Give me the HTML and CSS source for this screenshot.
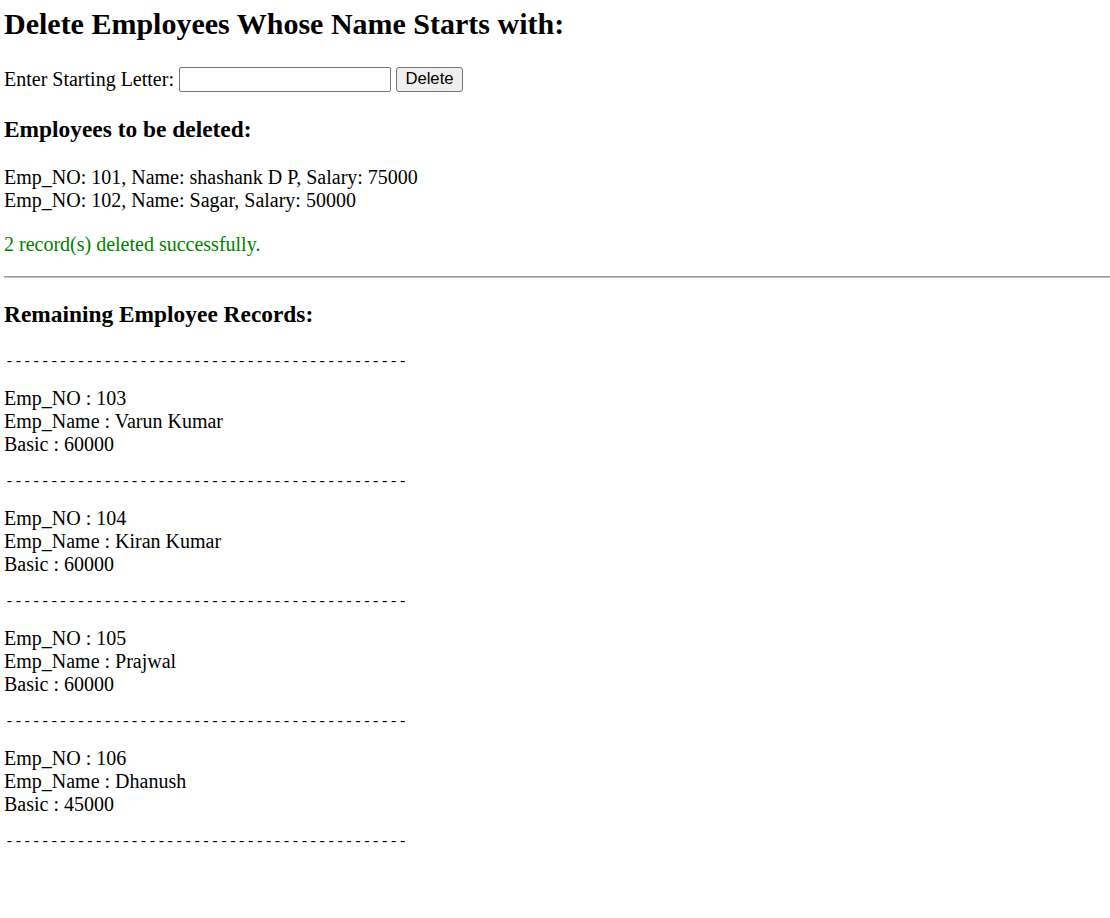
FILE: index.html
```html
<!DOCTYPE html>
<html>
<head>
<meta charset="utf-8">
<title>Delete Employees</title>
<link rel="stylesheet" href="styles.css">
</head>
<body>
<h2 class="title">Delete Employees Whose Name Starts with:</h2>
<form class="form">Enter Starting Letter: <input class="field" type="text"> <button class="btn" type="button">Delete</button></form>
<h3 class="sub">Employees to be deleted:</h3>
<div class="list">Emp_NO: 101, Name: shashank D P, Salary: 75000<br>Emp_NO: 102, Name: Sagar, Salary: 50000</div>
<p class="ok">2 record(s) deleted successfully.</p>
<hr class="rule">
<h3 class="sub sub-records">Remaining Employee Records:</h3>
<pre class="dash">---------------------------------------------</pre>
Emp_NO : 103<br>Emp_Name : Varun Kumar<br>Basic : 60000
<pre class="dash">---------------------------------------------</pre>
Emp_NO : 104<br>Emp_Name : Kiran Kumar<br>Basic : 60000
<pre class="dash">---------------------------------------------</pre>
Emp_NO : 105<br>Emp_Name : Prajwal<br>Basic : 60000
<pre class="dash">---------------------------------------------</pre>
Emp_NO : 106<br>Emp_Name : Dhanush<br>Basic : 45000
<pre class="dash">---------------------------------------------</pre>
</body>
</html>
```
FILE: styles.css
```css
html { background: #fff; }
body {
  margin: 0 0 0 4px;
  font-family: "Liberation Serif", "Times New Roman", serif;
  font-size: 20px;
  line-height: 23px;
  color: #000;
}
.title {
  font-size: 30px;
  line-height: 34.5px;
  margin: 6.5px 0 24.9px;
  font-weight: bold;
}
.form {
  margin: 0;
  display: flex;
  align-items: center;
  height: 26.5px;
  white-space: pre;
}
.field {
  box-sizing: border-box;
  width: 212px;
  height: 25px;
  margin: 0 5px 0 0;
  border: 1px solid #767676;
  border-radius: 2px;
  padding: 1px 3px;
  font: 16.67px "Liberation Sans", Arial, sans-serif;
  background: #fff;
}
.btn {
  box-sizing: border-box;
  width: 67px;
  height: 25px;
  margin: 0;
  padding: 0 8px;
  border: 1px solid #767676;
  border-radius: 3px;
  background: #efefef;
  color: #000;
  font: 16.67px "Liberation Sans", Arial, sans-serif;
}
.sub {
  font-size: 23.4px;
  line-height: 26.9px;
  margin: 23.4px 0;
  font-weight: bold;
}
.sub-records { margin-bottom: 25.4px; }
.list { margin: 0; }
.ok {
  color: #008000;
  margin: 20.5px 0 20px;
}
.rule {
  margin: 10px 0;
  border: 0;
  border-top: 1px solid #9a9a9a;
  border-bottom: 1px solid #c4c4c4;
  height: 0;
}
.dash {
  font-family: "Liberation Mono", "Courier New", monospace;
  font-size: 14.9px;
  line-height: 18.75px;
  margin: 17px 0 15.25px;
  padding-left: 1px;
}
```
